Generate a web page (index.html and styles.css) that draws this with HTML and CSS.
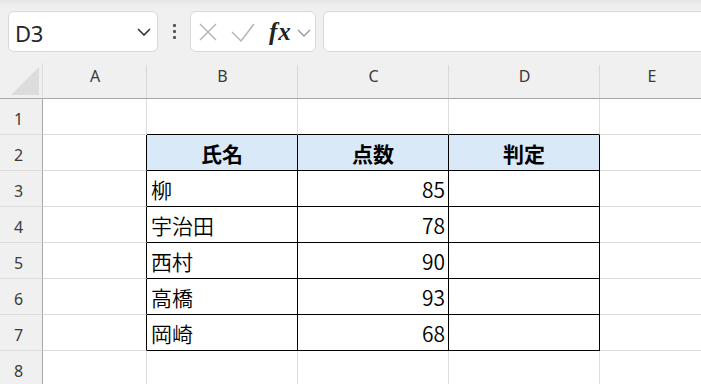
FILE: index.html
```html
<!DOCTYPE html>
<html lang="ja">
<head>
<meta charset="utf-8">
<title>Sheet</title>
<link rel="stylesheet" href="styles.css">
</head>
<body>
<div class="app">
  <div class="fbar">
    <div class="namebox">
      <span class="ref">D3</span>
      <svg class="chev" width="14" height="8" viewBox="0 0 14 8"><polyline points="1,1 7,7 13,1" fill="none" stroke="#333" stroke-width="1.6"/></svg>
    </div>
    <div class="dots"><i></i><i></i><i></i></div>
    <div class="fxbox">
      <svg class="ico-x" width="18" height="18" viewBox="0 0 18 18"><path d="M1 1L17 17M17 1L1 17" stroke="#b3b3b3" stroke-width="1.4" fill="none"/></svg>
      <svg class="ico-ok" width="24" height="19" viewBox="0 0 24 19"><polyline points="1,9 10,18 23,1" fill="none" stroke="#b3b3b3" stroke-width="1.4"/></svg>
      <span class="fx">fx</span>
      <svg class="chev-s" width="14" height="8" viewBox="0 0 14 8"><polyline points="1,1 7,7 13,1" fill="none" stroke="#999" stroke-width="1.4"/></svg>
    </div>
    <div class="formula"></div>
  </div>

  <div class="sheet">
    <div class="corner"><svg width="28" height="28" viewBox="0 0 28 28"><polygon points="28,0 28,28 0,28" fill="#dcdcdc"/></svg></div>
    <div class="ch">A</div>
    <div class="ch">B</div>
    <div class="ch">C</div>
    <div class="ch">D</div>
    <div class="ch">E</div>

    <div class="rh">1</div>
    <div class="c"></div>
    <div class="c bb"></div>
    <div class="c bb"></div>
    <div class="c bb"></div>
    <div class="c"></div>

    <div class="rh">2</div>
    <div class="c br"></div>
    <div class="c th br bb">氏名</div>
    <div class="c th br bb">点数</div>
    <div class="c th br bb">判定</div>
    <div class="c"></div>

    <div class="rh">3</div>
    <div class="c br"></div>
    <div class="c txt br bb">柳</div>
    <div class="c num br bb">85</div>
    <div class="c br bb"></div>
    <div class="c"></div>

    <div class="rh">4</div>
    <div class="c br"></div>
    <div class="c txt br bb">宇治田</div>
    <div class="c num br bb">78</div>
    <div class="c br bb"></div>
    <div class="c"></div>

    <div class="rh">5</div>
    <div class="c br"></div>
    <div class="c txt br bb">西村</div>
    <div class="c num br bb">90</div>
    <div class="c br bb"></div>
    <div class="c"></div>

    <div class="rh">6</div>
    <div class="c br"></div>
    <div class="c txt br bb">高橋</div>
    <div class="c num br bb">93</div>
    <div class="c br bb"></div>
    <div class="c"></div>

    <div class="rh">7</div>
    <div class="c br"></div>
    <div class="c txt br bb">岡崎</div>
    <div class="c num br bb">68</div>
    <div class="c br bb"></div>
    <div class="c"></div>

    <div class="rh">8</div>
    <div class="c"></div>
    <div class="c"></div>
    <div class="c"></div>
    <div class="c"></div>
    <div class="c"></div>
  </div>
</div>
</body>
</html>
```

FILE: styles.css
```css
* { box-sizing: border-box; }
html, body {
  margin: 0;
  padding: 0;
  background: #f0f0f0;
}
body {
  width: 701px;
  height: 384px;
  overflow: hidden;
  font-family: "Noto Sans", "Liberation Sans", sans-serif;
}
.app {
  width: 701px;
  height: 384px;
  overflow: hidden;
}

/* formula bar */
.fbar {
  height: 63px;
  display: flex;
  align-items: flex-start;
  padding: 11px 0 0 8px;
  background: linear-gradient(#e4e4e4 0, #ececec 4px, #f0f0f0 9px);
}
.namebox {
  flex: none;
  width: 150px;
  height: 41px;
  background: #fff;
  border: 1px solid #d8d8d8;
  border-radius: 6px;
  display: flex;
  align-items: center;
  justify-content: space-between;
  padding: 0 6px 0 6px;
}
.ref {
  font-size: 22px;
  color: #262626;
  line-height: 41px;
  padding-top: 4px;
  letter-spacing: -0.3px;
}
.chev { display: block; margin-top: 1px; }
.dots {
  flex: none;
  width: 32px;
  height: 41px;
  display: flex;
  flex-direction: column;
  align-items: center;
  padding-top: 13px;
  gap: 3px;
}
.dots i {
  display: block;
  width: 3px;
  height: 3px;
  border-radius: 1px;
  background: #555;
}
.fxbox {
  flex: none;
  width: 126px;
  height: 41px;
  background: #fff;
  border: 1px solid #d8d8d8;
  border-radius: 6px;
  display: flex;
  align-items: center;
  padding-left: 8px;
}
.ico-x { display: block; margin-top: 1px; }
.ico-ok { display: block; margin-left: 14px; margin-top: 1px; }
.fx {
  margin-left: 14px;
  font-family: "Liberation Serif", "DejaVu Serif", serif;
  font-style: italic;
  font-weight: bold;
  font-size: 25px;
  color: #222;
  letter-spacing: 1px;
  line-height: 24px;
  margin-top: 1px;
}
.chev-s { display: block; margin-left: 5px; margin-top: 2px; }
.formula {
  flex: none;
  width: 420px;
  height: 41px;
  margin-left: 7px;
  background: #fff;
  border: 1px solid #d8d8d8;
  border-radius: 6px;
}

/* sheet grid */
.sheet {
  display: grid;
  grid-template-columns: 43px 104px 151px 151px 151px 104px;
  grid-auto-rows: 36px;
  background: #fff;
}
.corner {
  background: #f0f0f0;
  border-bottom: 1px solid #a8a8a8;
  border-right: 1px solid #dcdcdc;
  display: flex;
  align-items: flex-end;
  justify-content: flex-end;
  padding: 0 3px 3px 0;
}
.corner svg { display: block; }
.ch {
  background-color: #f0f0f0;
  background-image: linear-gradient(#d9d9d9, #d9d9d9);
  background-repeat: no-repeat;
  background-size: 1px calc(100% - 2px);
  background-position: right bottom;
  border-bottom: 1px solid #a8a8a8;
  text-align: center;
  font-size: 16px;
  line-height: 22px;
  padding-top: 2px;
  color: #3a3a3a;
}
.rh {
  background: #f0f0f0;
  border-right: 1px solid #a8a8a8;
  border-bottom: 1px solid #dcdcdc;
  text-align: center;
  padding-right: 5px;
  font-size: 16px;
  line-height: 22px;
  padding-top: 9px;
  color: #3a3a3a;
}
.c {
  border-right: 1px solid #dcdcdc;
  border-bottom: 1px solid #dcdcdc;
  font-family: "Noto Sans CJK JP", "Noto Sans", sans-serif;
  font-size: 21px;
  font-weight: 350;
  color: #000;
  display: flex;
  align-items: center;
  white-space: nowrap;
  overflow: hidden;
}
.br { border-right-color: #000; }
.bb { border-bottom-color: #000; }
.th {
  background: #dae9f8;
  font-weight: bold;
  justify-content: center;
}
.txt { padding-left: 4px; }
.num { justify-content: flex-end; padding-right: 3px; }
```
